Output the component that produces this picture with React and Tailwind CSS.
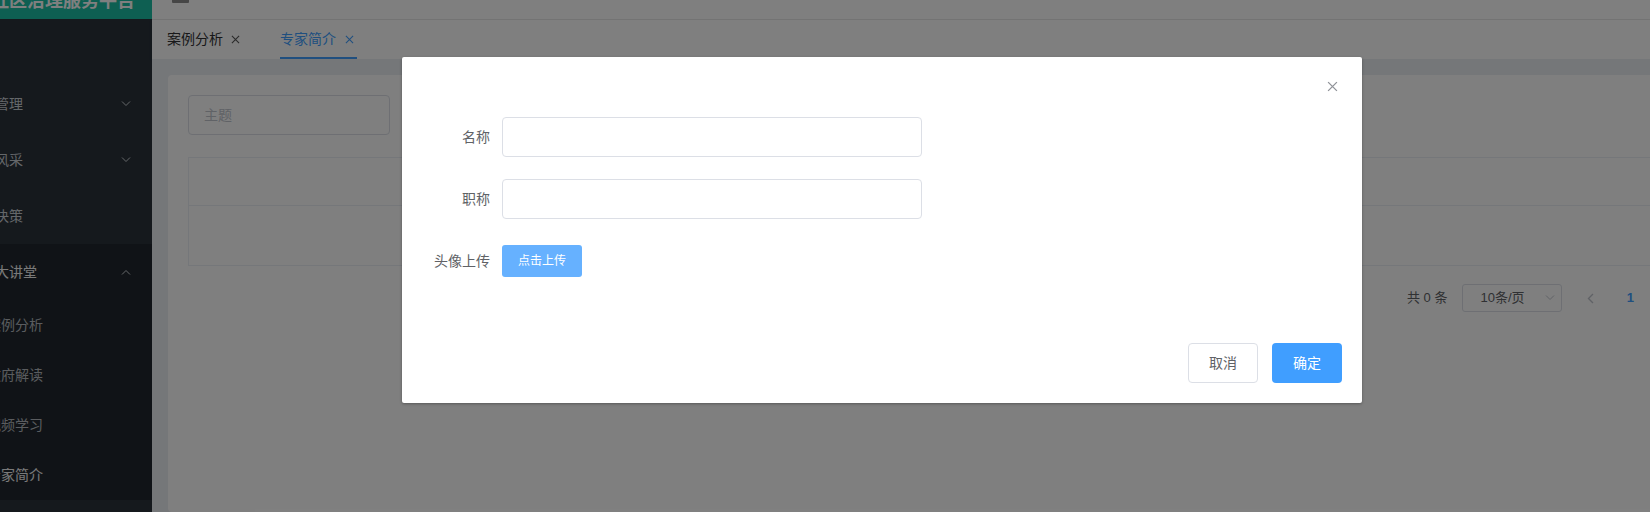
import React from "react";

const FONT = { fontFamily: '"Liberation Sans", "Noto Sans CJK SC", sans-serif' };

const Chevron = ({ up }) => (
  <svg width="10" height="6" viewBox="0 0 10 6" className="shrink-0">
    <polyline
      points={up ? "1,5.5 5,1.5 9,5.5" : "1,0.5 5,4.5 9,0.5"}
      fill="none"
      stroke="currentColor"
      strokeWidth="1"
    />
  </svg>
);

const Close = ({ size = 8, className = "" }) => (
  <svg width={size} height={size} viewBox="0 0 10 10" className={className}>
    <path d="M1 1 L9 9 M9 1 L1 9" stroke="currentColor" strokeWidth="1.2" fill="none" />
  </svg>
);

const menu = [
  { label: "管理", arrow: "down" },
  { label: "风采", arrow: "down" },
  { label: "决策" },
];

const subMenu = [
  { label: "案例分析" },
  { label: "政府解读" },
  { label: "视频学习" },
  { label: "专家简介", active: true },
];

const Sidebar = () => (
  <aside className="w-[152px] shrink-0 h-full flex flex-col bg-[#2a323b] overflow-hidden">
    {/* LOGO */}
    <div className="h-[19px] shrink-0 bg-[#1cbea4] overflow-hidden">
      <div className="ml-[-9px] mt-[-8px] whitespace-nowrap text-[18px] leading-[18px] font-bold text-white">
        社区治理服务平台
      </div>
    </div>

    {/* MENU */}
    <div className="h-[57px] shrink-0" />
    {menu.map((m) => (
      <div
        key={m.label}
        className="h-[56px] shrink-0 flex items-center justify-between pr-[21px] text-[14px] text-[#c9ced4]"
      >
        <span className="ml-[-5px] whitespace-nowrap">{m.label}</span>
        {m.arrow && <Chevron />}
      </div>
    ))}

    <div className="bg-[#21272e] shrink-0">
      <div className="h-[56px] flex items-center justify-between pr-[21px] text-[14px] text-[#f4f4f4]">
        <span className="ml-[-5px] whitespace-nowrap">大讲堂</span>
        <span className="text-[#c9ced4]">
          <Chevron up />
        </span>
      </div>
      {subMenu.map((s) => (
        <div
          key={s.label}
          className={`h-[50px] flex items-center text-[14px] ${
            s.active ? "text-[#f4f4f4]" : "text-[#b4b9be]"
          }`}
        >
          <span className="ml-[-13px] whitespace-nowrap">{s.label}</span>
        </div>
      ))}
    </div>
    <div className="flex-1 bg-[#2a323b]" />
  </aside>
);

const Main = () => (
  <main className="flex-1 flex flex-col min-w-0 h-full">
    {/* NAVBAR */}
    <div className="h-[20px] shrink-0 bg-white border-b border-[#ececec]">
      <div className="ml-[20px] w-[17px] h-[3px] bg-[#8c8c8c] rounded-b-[1px]" />
    </div>

    {/* TAGS VIEW */}
    <div className="h-[39px] shrink-0 bg-white flex items-stretch pl-[15px] gap-[40px] shadow-[0_1px_3px_rgba(0,21,41,0.12)]">
      <div className="flex items-center gap-[8px] text-[14px] text-[#303133]">
        <span>案例分析</span>
        <Close size={9} className="text-[#555]" />
      </div>
      <div className="flex items-center gap-[9px] text-[14px] text-[#409eff] border-b-2 border-[#409eff] pt-[2px] pr-[3px]">
        <span>专家简介</span>
        <Close size={9} className="text-[#409eff]" />
      </div>
    </div>

    {/* CONTENT */}
    <div className="flex-1 bg-[#ebeef2] pl-[16px] pt-[16px]">
      <div className="w-[1600px] h-full bg-white rounded-[4px] px-[20px] pt-[20px]">
        <div className="w-[202px] h-[40px] border border-[#dcdfe6] rounded-[4px] flex items-center pl-[15px] text-[14px] text-[#c0c4cc]">
          主题
        </div>

        <div className="mt-[22px] border border-[#ebeef5]">
          <div className="h-[48px] border-b border-[#ebeef5]" />
          <div className="h-[59px]" />
        </div>

        {/* PAGINATION */}
        <div className="mt-[18px] ml-[1219px] flex items-center text-[13px] text-[#606266]">
          <span className="whitespace-nowrap">共 0 条</span>
          <div className="ml-[15px] w-[100px] h-[28px] border border-[#dcdfe6] rounded-[3px] flex items-center justify-between pl-[17px] pr-[6px]">
            <span>10条/页</span>
            <span className="text-[#c0c4cc]">
              <Chevron />
            </span>
          </div>
          <div className="ml-[13px] w-[30px] flex justify-center text-[#c0c4cc]">
            <svg width="7" height="11" viewBox="0 0 7 11">
              <polyline points="6,1 1.5,5.5 6,10" fill="none" stroke="currentColor" strokeWidth="1.4" />
            </svg>
          </div>
          <div className="ml-[10px] w-[30px] text-center font-bold text-[#409eff]">1</div>
        </div>
      </div>
    </div>
  </main>
);

const Dialog = () => (
  <div className="absolute inset-0">
    <div className="ml-[402px] mt-[57px] w-[960px] bg-white rounded-[2px] shadow-[0_1px_3px_rgba(0,0,0,0.3)]">
      {/* HEADER */}
      <div className="h-[30px] relative">
        <button className="absolute top-[24px] right-[24px] text-[#909399]">
          <Close size={11} />
        </button>
      </div>

      {/* BODY */}
      <div className="px-[20px] pt-[30px] pb-[30px]">
        {[
          { label: "名称" },
          { label: "职称" },
        ].map((f) => (
          <div key={f.label} className="flex mb-[22px]">
            <label className="w-[80px] pr-[12px] text-right text-[14px] leading-[40px] text-[#606266]">
              {f.label}
            </label>
            <div className="w-[420px] h-[40px] border border-[#dcdfe6] rounded-[4px]" />
          </div>
        ))}
        <div className="flex items-center h-[40px] mb-[22px]">
          <label className="w-[80px] pr-[12px] text-right text-[14px] text-[#606266] whitespace-nowrap">
            头像上传
          </label>
          <button className="h-[32px] w-[80px] rounded-[3px] bg-[#66b1ff] text-white text-[12px]">
            点击上传
          </button>
        </div>
      </div>

      {/* FOOTER */}
      <div className="flex justify-end gap-[14px] px-[20px] pt-[10px] pb-[20px]">
        <button className="w-[70px] h-[40px] border border-[#dcdfe6] rounded-[4px] text-[14px] text-[#606266] bg-white">
          取消
        </button>
        <button className="w-[70px] h-[40px] rounded-[4px] text-[14px] text-white bg-[#409eff]">
          确定
        </button>
      </div>
    </div>
  </div>
);

export default function App() {
  return (
    <div className="relative w-[1650px] h-[512px] overflow-hidden bg-white" style={FONT}>
      <div className="flex h-full">
        <Sidebar />
        <Main />
      </div>
      {/* MODAL MASK */}
      <div className="absolute inset-0 bg-black/50" />
      <Dialog />
    </div>
  );
}
